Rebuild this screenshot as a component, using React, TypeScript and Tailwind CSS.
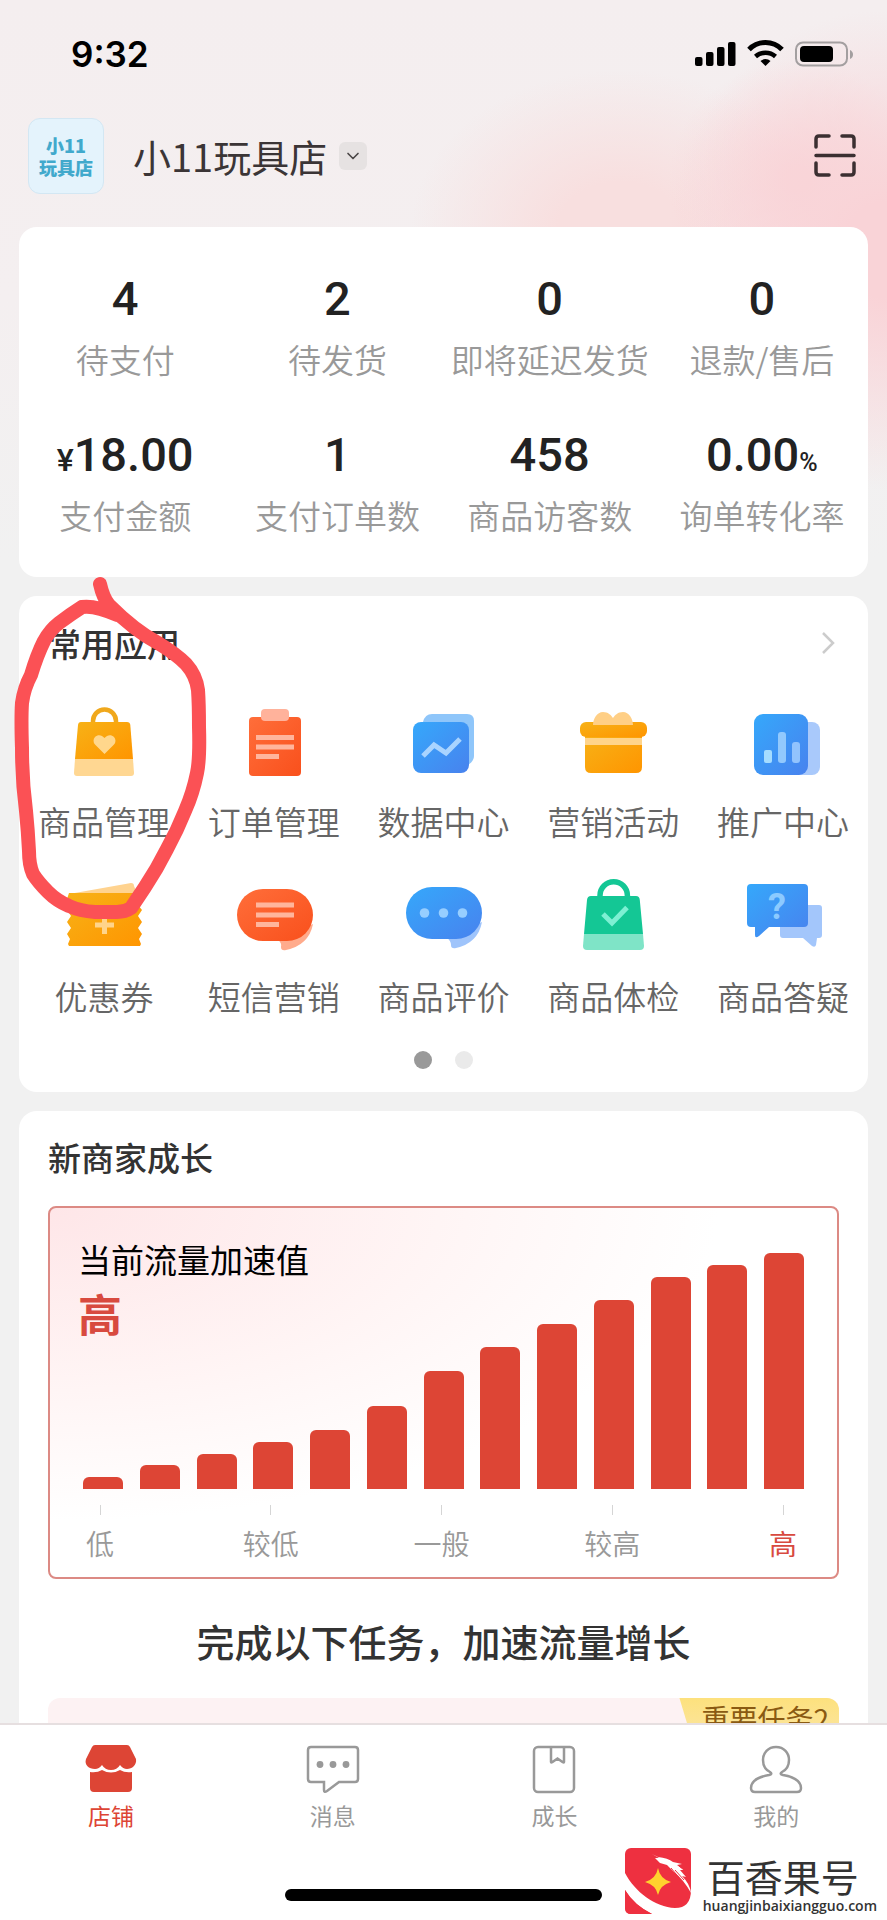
import type { ReactNode } from "react";
import { ChevronDown } from "lucide-react";

const stats = [
  { label: "待支付", value: "4" },
  { label: "待发货", value: "2" },
  { label: "即将延迟发货", value: "0" },
  { label: "退款/售后", value: "0" },
  { label: "支付金额", value: "18.00", prefix: "¥" },
  { label: "支付订单数", value: "1" },
  { label: "商品访客数", value: "458" },
  { label: "询单转化率", value: "0.00", suffix: "%" },
];

const Svg = ({ children }: { children: ReactNode }) => (
  <svg viewBox="0 0 80 80" className="size-20" fill="none" aria-hidden="true">
    {children}
  </svg>
);

const GoodsIcon = () => (
  <Svg>
    <path d="M29 20v-3a11.500 11.500 0 0 1 23 0v3" stroke="#f0a81c" strokeWidth="4.500" />
    <path d="M17 18h46q3 0 3.300 3L69 55H11l3-34q.3-3 3-3z" fill="url(#amber)" />
    <path d="M11 55h58l1 14q0 3-3 3H13q-3 0-3-3z" fill="#ffd792" />
    <path d="M40.500 50 31 40.500a5.500 5.500 0 0 1 0-7.500c3-3 7-2 9.500 1 2.500-3 6.500-4 9.500-1a5.500 5.500 0 0 1 0 7.500z" fill="#ffd78c" />
  </Svg>
);

const OrderIcon = () => (
  <Svg>
    <rect x="15" y="13" width="52" height="59" rx="4" fill="url(#orange)" />
    <rect x="27" y="5" width="28" height="12" rx="4" fill="#ffb29b" />
    <path d="M22 33.500h38M22 43h38M22 52.500h23" stroke="#ffb59c" strokeWidth="5" />
  </Svg>
);

const DataIcon = () => (
  <Svg>
    <path d="M20 18q2-8 9-8h35q7 0 7 7v35q0 5-6 9z" fill="#8fc6fa" />
    <rect x="10" y="18" width="56" height="51" rx="8" fill="url(#blue)" />
    <path d="m20 52 11-11 12 8 14-14" stroke="#a9d4ff" strokeWidth="5" />
  </Svg>
);

const GiftIcon = () => (
  <Svg>
    <path d="M12 30h57v33q0 6-6 6H18q-6 0-6-6z" fill="url(#amber)" />
    <rect x="7" y="18" width="67" height="15" rx="6" fill="url(#amber)" />
    <path d="M20 21c0-6 4-13 10-13 5 0 8 3 10 6 2-3 5-6 10-6 6 0 10 7 10 13z" fill="#ffcf85" />
    <path d="M12 34h57v7H12z" fill="#ffd48a" />
  </Svg>
);

const PromoIcon = () => (
  <Svg>
    <rect x="38" y="18" width="39" height="53" rx="8" fill="#a9c9fb" />
    <rect x="11" y="10" width="54" height="61" rx="9" fill="url(#blue)" />
    <rect x="21" y="46" width="8" height="13" rx="2" fill="#a5dcff" />
    <rect x="35" y="28" width="8" height="31" rx="3" fill="#92c9fd" />
    <rect x="49" y="38" width="8" height="21" rx="3" fill="#92c3fd" />
  </Svg>
);

const CouponIcon = () => (
  <Svg>
    <path d="m5 15 62-11q3 0 3 3l4 9z" fill="#ffd38f" />
    <path
      d="M5 14h71l2 6-4 6 4 5-4 6 4 6-4 6 4 6-3 5 2 5-1 2H5l-1-2 2-5-3-5 4-6-4-6 4-6-4-6 4-5-4-6z"
      fill="url(#amber)"
    />
    <path d="M40.500 37v18M31 46h19" stroke="#ffd48a" strokeWidth="5" />
  </Svg>
);

const SmsIcon = () => (
  <Svg>
    <path d="M44 61q4 3 3 7 0 4 5 3 23-5 27-26z" fill="#ffab8c" />
    <rect x="3" y="10" width="76" height="52" rx="26" fill="url(#orange)" />
    <path d="M22 26h38M22 36h38M22 45.500h23" stroke="#ffb59c" strokeWidth="5" />
  </Svg>
);

const ReviewIcon = () => (
  <Svg>
    <path d="M44 59q4 3 4 7 0 4 5 3 22-5 26-26z" fill="#9fc4fb" />
    <rect x="3" y="8" width="76" height="52" rx="26" fill="url(#blue)" />
    <circle cx="21.500" cy="34" r="4.800" fill="#97ceff" />
    <circle cx="40.500" cy="34" r="4.800" fill="#97ceff" />
    <circle cx="59.500" cy="34" r="4.800" fill="#97ceff" />
  </Svg>
);

const CheckupIcon = () => (
  <Svg>
    <path d="M27 20v-3.500a13.700 13.700 0 0 1 27.400 0V20" stroke="#14c795" strokeWidth="5.500" />
    <path d="M18 17h45q3.500 0 3.800 4L70 55H11l3-34q.4-4 4-4z" fill="#14c795" />
    <path d="M11 55h59l1 12q0 4-4 4H14q-4 0-4-4z" fill="#7fe4c7" />
    <path d="m30 35 9 9 15-15.500" stroke="#7df0d3" strokeWidth="5" />
  </Svg>
);

const AnswerIcon = () => (
  <Svg>
    <path d="M40 26h36q3 0 3 3v27q0 3-3 3h-2l-1 7q-1 3-4 1l-9-8H40q-3 0-3-3V29q0-3 3-3z" fill="#a3c6fb" />
    <path d="M8 5h53q4 0 4 4v35q0 4-4 4H26l-10 9q-4 3-4-1v-8H8q-4 0-4-4V9q0-4 4-4z" fill="url(#blue)" />
    <text x="34" y="40" textAnchor="middle" fontSize="36" fontWeight="700" fill="#8ccaff" fontFamily="Roboto, sans-serif">
      ?
    </text>
  </Svg>
);

const apps = [
  { label: "商品管理", Icon: GoodsIcon },
  { label: "订单管理", Icon: OrderIcon },
  { label: "数据中心", Icon: DataIcon },
  { label: "营销活动", Icon: GiftIcon },
  { label: "推广中心", Icon: PromoIcon },
  { label: "优惠券", Icon: CouponIcon },
  { label: "短信营销", Icon: SmsIcon },
  { label: "商品评价", Icon: ReviewIcon },
  { label: "商品体检", Icon: CheckupIcon },
  { label: "商品答疑", Icon: AnswerIcon },
];

const bars = [1, 2, 3, 4, 5, 7, 10, 12, 14, 16, 18, 19, 20];
const levels = ["低", "较低", "一般", "较高", "高"];

const tabs = [
  {
    label: "店铺",
    icon: (
      <>
        <path d="M10 0h32q2 0 3 2l6 12c1 6-4 10-9 10q-4 0-7-4-3 5-9 5t-9-5q-3 4-7 4c-6 0-11-4-9-10L7 2q1-2 3-2z" fill="#dd4535" />
        <path d="M5 27q7 1 12-2 9 5 18 0 5 3 12 2v16q0 4-4 4H9q-4 0-4-4z" fill="#dd4535" />
      </>
    ),
  },
  {
    label: "消息",
    icon: (
      <>
        <path d="M4 2h44q3 0 3 3v29q0 3-3 3H32l-12 9q-3 2-3-1v-8H4q-3 0-3-3V5q0-3 3-3z" stroke="#999" strokeWidth="2.500" />
        <circle cx="13" cy="19.500" r="3.400" fill="#999" />
        <circle cx="26" cy="19.500" r="3.400" fill="#999" />
        <circle cx="39" cy="19.500" r="3.400" fill="#999" />
      </>
    ),
  },
  {
    label: "成长",
    icon: (
      <>
        <rect x="6" y="2" width="40" height="45" rx="4" stroke="#999" strokeWidth="2.500" />
        <path d="M23 2v15q0 1 1.500 0l5-3.500 5 3.500q1.500 1 1.500 0V2" stroke="#999" strokeWidth="2.500" />
      </>
    ),
  },
  {
    label: "我的",
    icon: (
      <path
        d="M26 2c-8 0-13 6-13 13 0 6 3 10 7 12q3 2-1 3C8 32 1 36 1 43q0 4 4 4h42q4 0 4-4c0-7-7-11-18-13q-4-1-1-3c4-2 7-6 7-12 0-7-5-13-13-13z"
        stroke="#999"
        strokeWidth="2.500"
      />
    ),
  },
];

// shared fills for the app icons
const Gradients = () => (
  <svg className="absolute size-0" aria-hidden="true">
    <defs>
      <linearGradient id="amber" x1="0" y1="0" x2="1" y2="1">
        <stop stopColor="#f7b217" />
        <stop offset="1" stopColor="#ff9500" />
      </linearGradient>
      <linearGradient id="orange" x1="0" y1="0" x2="1" y2="1">
        <stop stopColor="#ff6e3a" />
        <stop offset="1" stopColor="#f9501c" />
      </linearGradient>
      <linearGradient id="blue" x1="0" y1="0" x2="1" y2="1">
        <stop stopColor="#35a8fb" />
        <stop offset="1" stopColor="#4882ee" />
      </linearGradient>
    </defs>
  </svg>
);

function StatusBar() {
  return (
    <div className="flex h-27 items-center justify-between pr-[34px] pl-[71px]">
      <span className="font-[Inter] text-[35px] leading-10 font-semibold text-black">9:32</span>
      <svg viewBox="0 0 158 28" className="h-7 w-[158px]" fill="none" aria-hidden="true">
        <rect x="0" y="17" width="7.500" height="9" rx="2" fill="#000" />
        <rect x="11" y="12" width="7.500" height="14" rx="2" fill="#000" />
        <rect x="22" y="7" width="7.500" height="19" rx="2" fill="#000" />
        <rect x="33" y="2" width="7.500" height="24" rx="2" fill="#000" />
        <path d="M54 9.500a23 23 0 0 1 33 0" stroke="#000" strokeWidth="5" />
        <path d="M60.500 16.500a15 15 0 0 1 20 0" stroke="#000" strokeWidth="4.500" />
        <path d="m70.500 26-5-5a7.500 7.500 0 0 1 10 0z" fill="#000" />
        <rect x="101" y="2.500" width="51" height="23" rx="7" stroke="#a39fa0" strokeWidth="2" />
        <rect x="105" y="6" width="33" height="16" rx="4" fill="#000" />
        <path d="M155 10q3 1.500 3 4.500t-3 4.500z" fill="#a39fa0" />
      </svg>
    </div>
  );
}

function ShopHeader() {
  return (
    <header className="mb-[23px] flex h-24 items-center pr-[31px] pl-7">
      <div className="flex size-[76px] flex-col items-center justify-center rounded-xl border border-[#d3e7f3] bg-[#e4f3fc] text-[18px] leading-[22px] font-black text-[#41a9cc]">
        <span>小11</span>
        <span>玩具店</span>
      </div>
      <h1 className="ml-[29px] text-[38px] leading-[48px] text-[#3b3536]">小11玩具店</h1>
      <button type="button" aria-label="切换店铺" className="ml-3 flex size-7 items-center justify-center rounded-md bg-[#e6e2e2]">
        <ChevronDown className="size-5 text-[#4a4646]" />
      </button>
      <button type="button" aria-label="扫一扫" className="ml-auto">
        <svg viewBox="0 0 42 44" className="h-11 w-[42px]" fill="none" stroke="#3b2f31" strokeWidth="3.500" strokeLinecap="round">
          <path d="M2 13V5q0-3 3-3h10M28 2h9q3 0 3 3v8M2 29v9q0 3 3 3h10M28 41h9q3 0 3-3v-9M2 21.500h38" />
        </svg>
      </button>
    </header>
  );
}

function Stats() {
  return (
    <section className="mx-[19px] grid grid-cols-4 gap-y-13 rounded-[18px] bg-white pt-12 pb-[42px]">
      {stats.map((s) => (
        <div key={s.label} className="flex flex-col items-center whitespace-nowrap">
          <p className="flex h-12 items-baseline font-[Roboto] text-[47px] leading-12 font-medium text-[#222]">
            {s.prefix && <span className="text-[32px]">{s.prefix}</span>}
            {s.value}
            {s.suffix && <span className="text-[25px]">{s.suffix}</span>}
          </p>
          <p className="mt-4 text-[33px] leading-10 font-[350] text-[#999]">{s.label}</p>
        </div>
      ))}
    </section>
  );
}

function Apps() {
  return (
    <section className="relative mx-[19px] rounded-[18px] bg-white pt-[27px] pb-[23px]">
      <div className="flex items-center justify-between pr-[33px] pl-[29px]">
        <h2 className="text-[33px] leading-10 font-medium text-[#333]">常用应用</h2>
        <button type="button" aria-label="更多应用">
          <svg viewBox="0 0 14 24" className="h-6 w-3.5" fill="none" stroke="#ccc" strokeWidth="2.500">
            <path d="m2 2 10 10L2 22" />
          </svg>
        </button>
      </div>
      <div className="mt-[41px] grid grid-cols-5 gap-y-[37px]">
        {apps.map(({ label, Icon }) => (
          <button type="button" key={label} className="flex flex-col items-center whitespace-nowrap">
            <Icon />
            <span className="mt-[17px] mb-px text-[33px] leading-10 font-[350] text-[#666]">{label}</span>
          </button>
        ))}
      </div>
      <div className="mt-[34px] flex justify-center gap-[23px]">
        <span className="size-[18px] rounded-full bg-[#999]" />
        <span className="size-[18px] rounded-full bg-[#eaeaea]" />
      </div>
      {/* hand-drawn ring around the first app */}
      <svg
        viewBox="0 0 210 350"
        className="pointer-events-none absolute -top-5 -left-2.5 h-[350px] w-[210px]"
        fill="none"
        stroke="#fb5155"
        strokeWidth="14"
        strokeLinecap="round"
        strokeLinejoin="round"
        aria-hidden="true"
      >
        <path d="M91 8c2 9 4 15 9 21 11 11 28 27 49 38 10 6 19 12 28 21q10 11 12 26 1 14 1 37 1 32-2 46-4 20-12 38-8 20-18 38-10 20-22 38l-14 21q-6 4-14 4H86q-15-1-26-6-12-5-21-14-10-10-15-18-4-9-4-23-1-20-3-40-4-30-4-63-1-30 0-45 2-15 9-28 6-20 13-34 6-11 15-18 12-9 23-16 13-2 35 8" />
      </svg>
    </section>
  );
}

function Growth() {
  return (
    <section className="mx-[19px] rounded-t-[18px] bg-white px-[29px] pt-[26px]">
      <h2 className="text-[33px] leading-10 font-medium text-[#333]">新商家成长</h2>
      <div className="mt-[29px] rounded-lg border-2 border-[#dc8a84] bg-[radial-gradient(ellipse_at_top_left,#fee6e8_0%,#fff5f5_35%,#ffffff_60%)] px-[22px] pt-[31px] pb-[17px]">
        <div className="grid">
          <div className="col-start-1 row-start-1 pl-1.5">
            <p className="text-[33px] leading-10 text-black">当前流量加速值</p>
            <p className="mt-2 text-[44px] leading-[52px] font-bold text-[#d84a3f]">高</p>
          </div>
          <div className="col-start-1 row-start-1 flex h-[250px] items-end justify-between px-[11px]">
            {bars.map((n) => (
              <div key={n} className="w-10 rounded-t-md bg-[#dd4535]" style={{ height: `${(n / 20) * 236}px` }} />
            ))}
          </div>
        </div>
        <div className="mt-4 mr-1 flex justify-between">
          {levels.map((l, i) => (
            <div key={l} className="flex w-14 flex-col items-center whitespace-nowrap">
              <span className="h-2.5 w-px bg-[#d5d5d5]" />
              <span className={`mt-3 mb-px text-[28px] leading-8 ${i === 4 ? "text-[#d84a3f]" : "font-[350] text-[#999]"}`}>{l}</span>
            </div>
          ))}
        </div>
      </div>
      <h3 className="mt-[38px] text-center text-[38px] leading-12 font-medium text-[#333]">完成以下任务，加速流量增长</h3>
      <div className="mt-[33px] flex h-40 items-start justify-end overflow-hidden rounded-xl bg-[#fdf2f3]">
        <span className="bg-gradient-to-b from-[#fde17d] to-[#fbe5a0] py-1 pr-2.5 pl-[22px] text-[28px] leading-8 text-[#8a5a12] [clip-path:polygon(0_0,100%_0,100%_100%,12px_100%)]">
          重要任务2
        </span>
      </div>
    </section>
  );
}

function TabBar() {
  return (
    <nav className="relative shrink-0 border-t-2 border-[#e6dfe0] bg-white pt-5 pb-[19px]">
      <div className="grid grid-cols-4">
        {tabs.map((t, i) => (
          <button type="button" key={t.label} className="flex flex-col items-center">
            <svg viewBox="0 0 52 48" className="h-12 w-13 overflow-visible" fill="none" aria-hidden="true">
              {t.icon}
            </svg>
            <span className={`mt-2 text-[23px] leading-7 ${i === 0 ? "text-[#dd4535]" : "text-[#999]"}`}>{t.label}</span>
          </button>
        ))}
      </div>
      <div className="mx-auto mt-15 h-3 w-[317px] rounded-full bg-black" />
      <Watermark />
    </nav>
  );
}

function Watermark() {
  return (
    <div className="absolute right-2.5 bottom-1 flex items-end gap-3">
      <svg viewBox="0 0 66 66" className="mb-0.5 size-[66px]" aria-hidden="true">
        <rect width="66" height="66" rx="6" fill="#ee3040" />
        {/* white orbit sweeping under the star */}
        <path d="M0 25C10 44 30 59 50 60q16 0 16-18v24H27Q9 57 0 42z" fill="#fff" />
        <path d="M0 42q9 15 27 24H6q-6 0-6-6z" fill="#ee3040" />
        <path d="m27 6 6 3q10 1 15 5l9 2-5 1 7 5-4 0 6 7-4-1q8 8 9 17-7-13-17-21l-7-7-7-2-5-5 4 0z" fill="#fff" />
        <path d="m50 22 9 10M46 20l10 12M54 18l5 4" stroke="#ee3040" strokeWidth="1" />
        <path d="M33 20q2 11 13 14-11 3-13 13-2-10-13-13 11-3 13-14z" fill="#ffd22e" />
      </svg>
      <div className="flex flex-col">
        <span className="pl-1 text-[38px] leading-10 text-[#333]">百香果号</span>
        <span className="font-['Open_Sans'] text-[14px] leading-5 font-semibold text-[#333]">huangjinbaixiangguo.com</span>
      </div>
    </div>
  );
}

export default function App() {
  return (
    <div className="flex h-screen flex-col overflow-hidden bg-[#f1f1f1] font-['Noto_Sans_CJK_SC',sans-serif]">
      <Gradients />
      <main className="min-h-0 flex-1 overflow-hidden bg-[radial-gradient(ellipse_220px_240px_at_100%_250px,#f9d3d7_20%,#f9d3d700_100%),radial-gradient(ellipse_130px_120px_at_90%_180px,#f9d7da_10%,#f9d7da00_100%),radial-gradient(ellipse_210px_160px_at_70%_230px,#f8dfdf_30%,#f8dfdf00_100%),linear-gradient(to_bottom,#f4eeef_0px,#f4eff0_300px,#f1f1f1_560px)]">
        <StatusBar />
        <ShopHeader />
        <div className="flex flex-col gap-[19px]">
          <Stats />
          <Apps />
          <Growth />
        </div>
      </main>
      <TabBar />
    </div>
  );
}
